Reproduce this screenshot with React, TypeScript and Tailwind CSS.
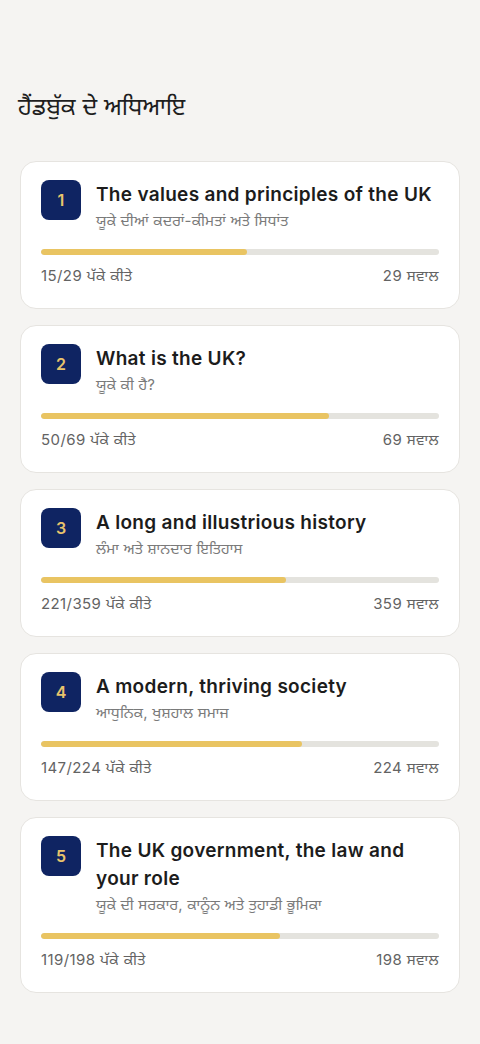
import React from 'react';

type Chapter = {
  id: number;
  title: string;
  subtitle: string;
  done: number;
  total: number;
};

const chapters: Chapter[] = [
  { id: 1, title: 'The values and principles of the UK', subtitle: 'ਯੂਕੇ ਦੀਆਂ ਕਦਰਾਂ-ਕੀਮਤਾਂ ਅਤੇ ਸਿਧਾਂਤ', done: 15, total: 29 },
  { id: 2, title: 'What is the UK?', subtitle: 'ਯੂਕੇ ਕੀ ਹੈ?', done: 50, total: 69 },
  { id: 3, title: 'A long and illustrious history', subtitle: 'ਲੰਮਾ ਅਤੇ ਸ਼ਾਨਦਾਰ ਇਤਿਹਾਸ', done: 221, total: 359 },
  { id: 4, title: 'A modern, thriving society', subtitle: 'ਆਧੁਨਿਕ, ਖੁਸ਼ਹਾਲ ਸਮਾਜ', done: 147, total: 224 },
  { id: 5, title: 'The UK government, the law and your role', subtitle: 'ਯੂਕੇ ਦੀ ਸਰਕਾਰ, ਕਾਨੂੰਨ ਅਤੇ ਤੁਹਾਡੀ ਭੂਮਿਕਾ', done: 119, total: 198 },
];

const font = { fontFamily: 'Inter, "Noto Sans", "Noto Sans Gurmukhi", sans-serif' };

const ChapterCard: React.FC<{ chapter: Chapter }> = ({ chapter }) => {
  const pct = (chapter.done / chapter.total) * 100;
  return (
    <div className="rounded-2xl border border-[#e6e4e0] bg-white px-5 pt-[18px] pb-[22px]">
      <div className="flex items-start gap-[15px]">
        <div className="flex h-10 w-10 shrink-0 items-center justify-center rounded-lg bg-[#0f2462] text-[16px] font-semibold text-[#e8c46c]">
          {chapter.id}
        </div>
        <div className="min-w-0 flex-1 pt-px">
          <div className="text-[19px] font-semibold leading-[28px] tracking-[0.3px] text-[#1c1c1c]">{chapter.title}</div>
          <div className="mt-[2px] text-[15px] leading-5 tracking-[0.2px] text-[#7a7a7a]">{chapter.subtitle}</div>
        </div>
      </div>
      <div className="mt-[18px] h-1.5 w-full overflow-hidden rounded-full bg-[#e4e3de]">
        <div className="h-full rounded-full bg-[#e9c462]" style={{ width: `${pct}%` }} />
      </div>
      <div className="mt-[11px] flex items-center justify-between text-[15px] leading-5 tracking-[0.4px] text-[#636363]">
        <span>{chapter.done}/{chapter.total} ਪੱਕੇ ਕੀਤੇ</span>
        <span>{chapter.total} ਸਵਾਲ</span>
      </div>
    </div>
  );
};

const App: React.FC = () => {
  return (
    <div className="min-h-screen bg-[#f5f4f2] px-5 pt-[91px] pb-10" style={font}>
      <h1 className="-ml-0.5 text-[24px] font-normal leading-8 text-[#1e1e1e]">ਹੈਂਡਬੁੱਕ ਦੇ ਅਧਿਆਇ</h1>
      <div className="mt-[38px] flex flex-col gap-4">
        {chapters.map(ch => (
          <ChapterCard key={ch.id} chapter={ch} />
        ))}
      </div>
    </div>
  );
};

export default App;
